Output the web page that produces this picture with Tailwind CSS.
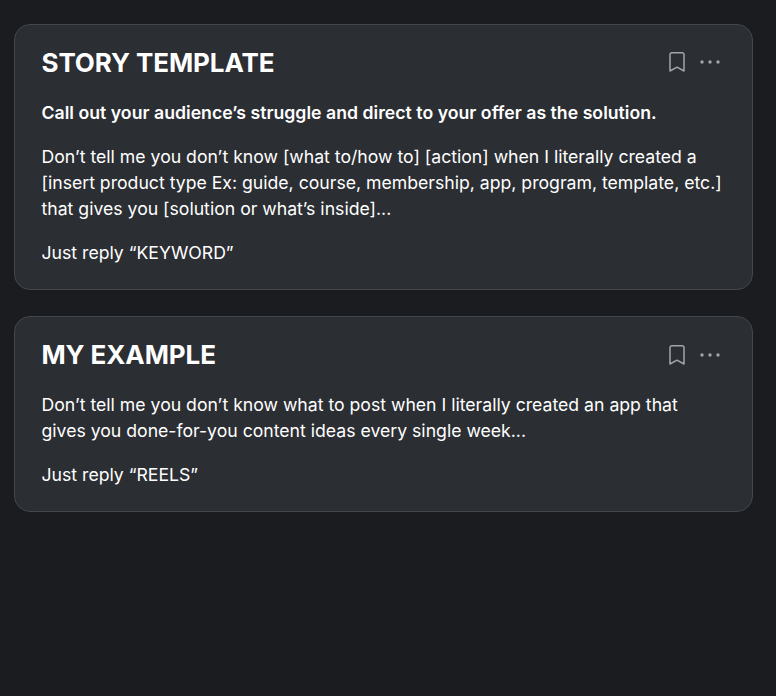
<!DOCTYPE html>
<html lang="en">
<head>
<meta charset="UTF-8">
<title>Story Template</title>
<script src="https://cdn.jsdelivr.net/npm/@tailwindcss/browser@4"></script>
</head>
<body class="bg-[#1a1c20] min-h-screen font-['Inter',sans-serif] text-white">
<div class="pt-6 pl-3.5 pr-[23px] flex flex-col gap-[26px]">
  <div class="bg-[#2b2e33] border border-[#43464b] rounded-2xl pl-[26.5px] pr-[26.5px] pt-[22px] pb-[23px]">
    <div class="flex items-center justify-between h-[30px]">
      <h2 class="text-[26px] font-bold tracking-[-0.1px]">STORY TEMPLATE</h2>
      <div class="flex items-center gap-[15px] mr-[5.5px] text-[#a3a5a8]">
        <svg class="w-[16px] h-[20px]" viewBox="0 0 16 20" fill="none" stroke="currentColor" stroke-width="1.5" stroke-linejoin="round"><path d="M1 2.6a1.8 1.8 0 0 1 1.8-1.8h10.4a1.8 1.8 0 0 1 1.8 1.8v16.4l-7-3.8-7 3.8z"/></svg>
        <svg class="w-[20px] h-[4px]" viewBox="0 0 20 4" fill="currentColor"><circle cx="2" cy="2" r="1.7"/><circle cx="10" cy="2" r="1.7"/><circle cx="18" cy="2" r="1.7"/></svg>
      </div>
    </div>
    <div class="mt-[23px] text-[17.65px] leading-[26px] flex flex-col gap-[18px]">
      <p class="font-semibold tracking-[0.03px]">Call out your audience’s struggle and direct to your offer as the solution.</p>
      <p>Don’t tell me you don’t know [what to/how to] [action] when I literally created a [insert product type Ex: guide, course, membership, app, program, template, etc.] that gives you [solution or what’s inside]...</p>
      <p>Just reply “KEYWORD”</p>
    </div>
  </div>
  <div class="bg-[#2b2e33] border border-[#43464b] rounded-2xl pl-[26.5px] pr-[26.5px] pt-[22px] pb-[23px]">
    <div class="flex items-center justify-between h-[30px]">
      <h2 class="text-[26px] font-bold tracking-[-0.1px]">MY EXAMPLE</h2>
      <div class="flex items-center gap-[15px] mr-[5.5px] mt-[2px] text-[#a3a5a8]">
        <svg class="w-[16px] h-[20px]" viewBox="0 0 16 20" fill="none" stroke="currentColor" stroke-width="1.5" stroke-linejoin="round"><path d="M1 2.6a1.8 1.8 0 0 1 1.8-1.8h10.4a1.8 1.8 0 0 1 1.8 1.8v16.4l-7-3.8-7 3.8z"/></svg>
        <svg class="w-[20px] h-[4px]" viewBox="0 0 20 4" fill="currentColor"><circle cx="2" cy="2" r="1.7"/><circle cx="10" cy="2" r="1.7"/><circle cx="18" cy="2" r="1.7"/></svg>
      </div>
    </div>
    <div class="mt-[23px] text-[17.65px] leading-[26px] flex flex-col gap-[18px]">
      <p>Don’t tell me you don’t know what to post when I literally created an app that gives you done-for-you content ideas every single week...</p>
      <p>Just reply “REELS”</p>
    </div>
  </div>
</div>
</body>
</html>
